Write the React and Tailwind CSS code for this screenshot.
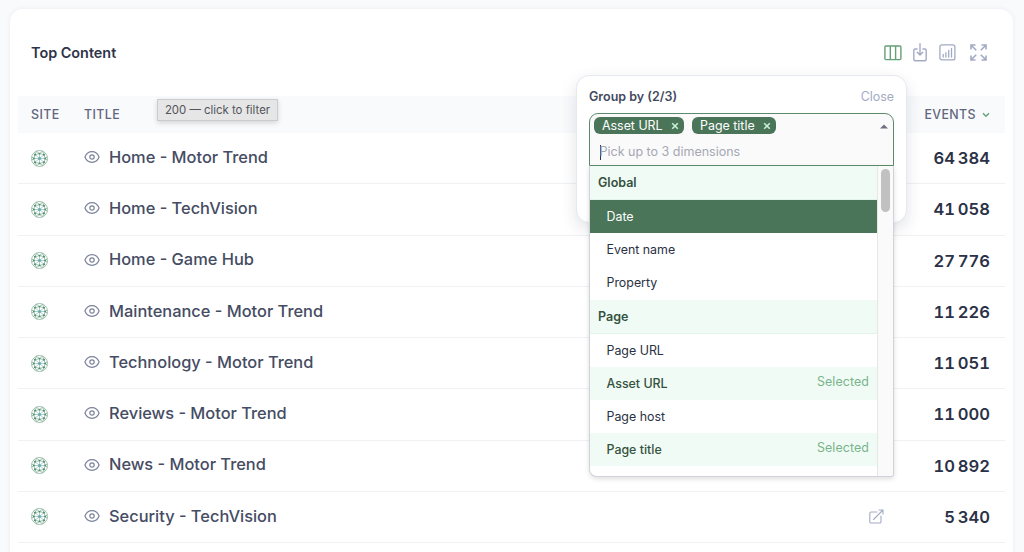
import React, { useState } from 'react'

const rows = [
    { title: 'Home - Motor Trend', events: 64384 },
    { title: 'Home - TechVision', events: 41058 },
    { title: 'Home - Game Hub', events: 27776 },
    { title: 'Maintenance - Motor Trend', events: 11226 },
    { title: 'Technology - Motor Trend', events: 11051 },
    { title: 'Reviews - Motor Trend', events: 11000 },
    { title: 'News - Motor Trend', events: 10892 },
    { title: 'Security - TechVision', events: 5340, link: true }
]

const groups = [
    { name: 'Global', options: ['Date', 'Event name', 'Property'] },
    { name: 'Page', options: ['Page URL', 'Asset URL', 'Page host', 'Page title'] }
]

// Thin space between the thousands
const formatNumber = (n) => String(n).replace(/\B(?=(\d{3})+$)/g, '\u2009')


// Icons
const SiteIcon = () => (
    <svg viewBox="0 0 17 17" className="block size-[17px]" fill="none" stroke="#7fae94" strokeWidth="0.75">
        <circle cx="8.5" cy="8.5" r="8"/>
        <path d="M8.500 3.600v9.800M4 4.700l9 7.600M13 4.700l-9 7.600M2.800 8.500h11.400" stroke="#8fc0b8"/>
        <path d="M4 4.700l4.500-1.100L13 4.700l1.200 3.800-1.200 3.800-4.500 1.100L4 12.300 2.800 8.500zM5.500 1.300l3 2.300 3-2.300M5.500 15.700l3-2.300 3 2.300M.8 7l2 1.500-2 1.500M16.200 7l-2 1.500 2 1.500M2.600 3.600 4 4.700l1.500-3.400M14.400 3.600 13 4.700l-1.500-3.400M2.600 13.400 4 12.300l1.500 3.400M14.400 13.400 13 12.300l-1.500 3.400"/>
        <g fill="#4f8a69" stroke="none">
            <circle cx="8.5" cy="3.6" r=".95"/>
            <circle cx="8.5" cy="13.4" r=".95"/>
            <circle cx="4" cy="4.7" r=".95"/>
            <circle cx="13" cy="4.7" r=".95"/>
            <circle cx="4" cy="12.3" r=".95"/>
            <circle cx="13" cy="12.3" r=".95"/>
            <circle cx="2.8" cy="8.5" r=".95"/>
            <circle cx="14.2" cy="8.5" r=".95"/>
        </g>
        <circle cx="8.5" cy="8.5" r="1.5" fill="#6aacac" stroke="none"/>
    </svg>
)

const EyeIcon = () => (
    <svg viewBox="0 0 16 14" className="block h-[14px] w-4" fill="none" stroke="#7c839b" strokeWidth="1.2">
        <path d="M.9 7C2.200 3.800 4.800 1.700 8 1.700S13.800 3.800 15.100 7C13.800 10.200 11.200 12.300 8 12.300S2.200 10.200.9 7z"/>
        <circle cx="8" cy="7" r="2.2"/>
    </svg>
)

const ColumnsIcon = () => (
    <svg viewBox="0 0 18 16" className="block h-4 w-[18px]" fill="none" stroke="#65a077" strokeWidth="1.4">
        <rect x=".9" y="1" width="16" height="13.6" rx="1"/>
        <path d="M6.300 1v13.600M11.600 1v13.600"/>
    </svg>
)

const DownloadIcon = () => (
    <svg viewBox="0 0 14 19" className="block h-[19px] w-[14px]" fill="none" stroke="#a3abc4" strokeWidth="1.4" strokeLinecap="round" strokeLinejoin="round">
        <path d="M4 6H2.300C1.400 6 .8 6.600.8 7.400v8.800c0 .9.600 1.500 1.500 1.500h9.400c.9 0 1.500-.6 1.500-1.500V7.400c0-.8-.6-1.400-1.500-1.400H10"/>
        <path d="M7 .8v11M4.200 9.300 7 12l2.800-2.700"/>
    </svg>
)

const ChartIcon = () => (
    <svg viewBox="0 0 17 17" className="block size-[17px]" fill="none" stroke="#a3abc4" strokeWidth="1.3">
        <rect x=".9" y=".9" width="15" height="15" rx="2"/>
        <path d="M4.200 10.500V13M6.900 8.700V13M9.700 6.500V13M12.500 4.300V13" strokeLinecap="round"/>
    </svg>
)

const ExpandIcon = () => (
    <svg viewBox="0 0 17 17" className="block size-[17px]" fill="none" stroke="#a3abc4" strokeWidth="1.6">
        <path d="M1 5.500V1h4.500M1.200 1.200l5 5M11.500 1H16v4.500M15.800 1.200l-5 5M1 11.500V16h4.500M1.200 15.800l5-5M16 11.500V16h-4.500M15.800 15.800l-5-5"/>
    </svg>
)

const LinkIcon = () => (
    <svg viewBox="0 0 15 15" className="block size-[15px]" fill="none" stroke="#a3abc4" strokeWidth="1.1" strokeLinecap="round" strokeLinejoin="round">
        <path d="M8 3H2.200C1.300 3 .8 3.500.8 4.300v8.400c0 .8.500 1.300 1.400 1.300h8.500c.8 0 1.300-.5 1.300-1.300V7M4.500 10.500 14 1M10 1h4v4"/>
    </svg>
)


const Tag = ({ name, onRemove }) => (
    <span className="flex h-[17px] items-center rounded-[6px] bg-[#4a7559] pr-[5px] pl-2 text-[12.4px] leading-none text-white">
        <span className="pt-px">{name}</span>
        <button onClick={onRemove} className="ml-[8.5px] flex size-2 items-center justify-center">
            <svg viewBox="0 0 8 8" className="size-2" stroke="#c8f0d4" strokeWidth="1.6">
                <path d="m1.200 1.200 5.600 5.600M6.800 1.200 1.200 6.800"/>
            </svg>
        </button>
    </span>
)

const Option = ({ name, active, selected, onClick }) => {
    let color = 'text-[#2b3042]'
    if(active) color = 'bg-[#4a7559] text-white'
    else if(selected) color = 'bg-[#f1fbf5] font-medium text-[#35523f]'

    return (
        <li onClick={onClick} className={`flex h-[33.2px] shrink-0 justify-between pr-2 pl-[16.5px] text-[12.4px] leading-[34px] ${color}`}>
            <span>{name}</span>
            {selected && <span className="text-[12.4px] leading-[29px] font-normal tracking-[.1px] text-[#78b48a]">Selected</span>}
        </li>
    )
}

const GroupBy = ({ onClose }) => {
    const [picked, setPicked] = useState(['Asset URL', 'Page title'])

    const toggle = (name) => {
        if(picked.includes(name)) {
            setPicked(picked.filter(item => item !== name))
        } else if(picked.length < 3) {
            setPicked([...picked, name])
        }
    }

    return (
        <div className="absolute top-[66px] left-[566px] h-[148px] w-[331px] rounded-[13px] border border-[#e6e8f1] bg-white px-3 pt-3 shadow-[0_6px_16px_rgba(30,40,70,0.13)]">
            <div className="flex h-[18px] items-center justify-between pt-px text-[12.5px]">
                <span className="font-semibold text-[#434961]">Group by ({picked.length}/3)</span>
                <button onClick={onClose} className="text-[12.4px] text-[#a3aabf]">Close</button>
            </div>

            <div className="relative mt-[7px] h-[53px] rounded-t-[9px] border border-[#5c8b6c] bg-[#fafafa] px-1 pt-[3px]">
                <div className="flex gap-2">
                    {picked.map(name => <Tag key={name} name={name} onRemove={() => toggle(name)}/>)}
                </div>
                <div className="mt-[10px] flex h-[17px] items-center pl-[5.5px] text-[12.5px] text-[#a5a8b3]">
                    <span className="-mr-px h-[15px] w-px bg-[#30354a]"></span>
                    Pick up to 3 dimensions
                </div>
                <svg viewBox="0 0 8 5" className="absolute top-[10px] right-[5px] h-[5px] w-2" fill="#6d7080">
                    <path d="M0 4.500 4 .5l4 4z"/>
                </svg>
            </div>

            <div className="relative z-10 flex h-[311px] overflow-hidden rounded-br-[3px] rounded-bl-[8px] border border-t-0 border-[#d0d3da] bg-white shadow-[0_2px_5px_rgba(0,0,0,0.13)]">
                <ul className="flex flex-1 flex-col overflow-hidden">
                    {groups.map(group => (
                        <React.Fragment key={group.name}>
                            <li className="h-[34px] shrink-0 border-b border-[#e3f4ea] bg-[#f1fbf5] pl-2 text-[12.5px] leading-[33px] font-semibold text-[#35523f]">
                                {group.name}
                            </li>
                            {group.options.map(name => (
                                <Option key={name} name={name} active={name === 'Date'} selected={picked.includes(name)} onClick={() => toggle(name)}/>
                            ))}
                        </React.Fragment>
                    ))}
                </ul>
                <div className="w-4 border-l border-[#e7e7e7] bg-[#fafafa] pt-[3px] pl-[3px]">
                    <div className="h-[43px] w-[9px] rounded-full bg-[#c1c1c1]"></div>
                </div>
            </div>
        </div>
    )
}

export default function App() {
    const [showGroupBy, setShowGroupBy] = useState(true)

    return (
        <div className="h-[552px] overflow-hidden bg-[#f9fafc] pt-[9px] pr-[11px] pl-[10px] font-['Inter','Liberation_Sans',sans-serif]">
            <div className="relative h-[600px] rounded-[13px] bg-white px-2 shadow-[0_0_5px_rgba(40,50,80,0.07)]">
                <div className="flex h-[87px] items-center justify-between pr-[18.5px] pl-[13px]">
                    <h2 className="text-[14.4px] font-semibold text-[#2d3348]">Top Content</h2>
                    <div className="flex items-center">
                        <button onClick={() => setShowGroupBy(!showGroupBy)}><ColumnsIcon/></button>
                        <button className="ml-[11px]"><DownloadIcon/></button>
                        <button className="ml-[11.500px]"><ChartIcon/></button>
                        <button className="ml-[14px]"><ExpandIcon/></button>
                    </div>
                </div>

                <div className="flex h-[37px] items-center bg-[#f9fafc] pt-px pr-[15px] pl-[13px] text-[12.4px] font-medium tracking-[.4px] text-[#5f667e]">
                    <span className="w-[53px]">SITE</span>
                    <span className="flex-1">TITLE</span>
                    <span>EVENTS</span>
                    <svg viewBox="0 0 8 6" className="ml-1.5 h-1.5 w-2" fill="none" stroke="#65a077" strokeWidth="1.4">
                        <path d="m1 1.200 3 3 3-3"/>
                    </svg>
                </div>

                {rows.map(row => (
                    <div key={row.title} className="flex h-[51.25px] items-center border-b border-[#eff1f4] pr-[15px] pl-[12.5px]">
                        <div className="w-[53.5px]"><SiteIcon/></div>
                        <div className="flex flex-1 items-center pb-[2px]">
                            <EyeIcon/>
                            <span className="ml-[9px] text-[16.4px] font-medium text-[#454c63]">{row.title}</span>
                        </div>
                        {row.link && <LinkIcon/>}
                        <span className="w-[106px] pt-px text-right text-[16.6px] font-semibold text-[#2b3147] tabular-nums">{formatNumber(row.events)}</span>
                    </div>
                ))}

                <div className="absolute top-[90px] left-[147px] flex h-[22px] w-[121px] items-center justify-center border border-[#cbcccf] bg-[#e6e6e7] pt-px text-[11.4px] text-[#535459] shadow-[0_2px_5px_rgba(0,0,0,0.15)]">
                    200 — click to filter
                </div>

                {showGroupBy && <GroupBy onClose={() => setShowGroupBy(false)}/>}
            </div>
        </div>
    )
}
